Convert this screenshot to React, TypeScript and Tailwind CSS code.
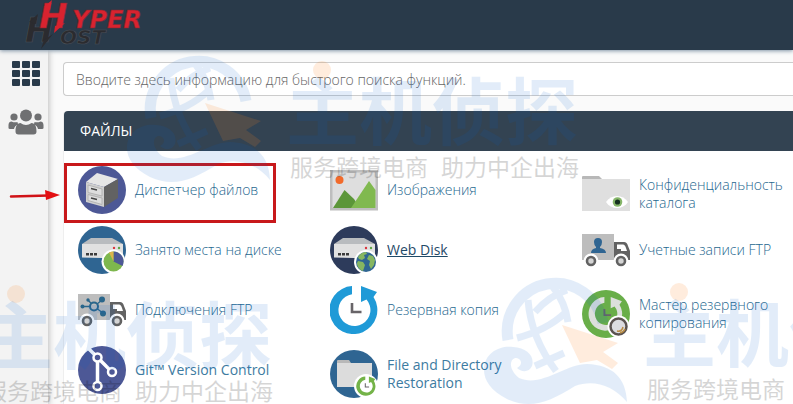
import type { ReactNode } from "react"

function Logo() {
  return (
    <svg viewBox="0 0 130 50" className="h-[50px] w-[130px]" role="img" aria-label="Hyper Host">
      <g fontFamily="DejaVu Sans" fontWeight="700" fontStyle="italic">
        <g fill="#2b2b2f" stroke="#4a5059" strokeWidth="0.6">
          <text x="1" y="42" fontSize="34">H</text>
          <text x="36" y="44" fontSize="20">OST</text>
        </g>
        <path d="M5 22 14 14 12 24z M20 40 29 34 17 49z" fill="#2b2b2f" />
        <g fill="#d8232f" stroke="#7d2731" strokeWidth="0.6">
          <text x="15" y="28" fontSize="34">H</text>
          <text x="48" y="28" fontSize="24">YPER</text>
        </g>
        <path d="M20 7 28 0 26 10z M31 26 41 23 30 33z" fill="#d8232f" />
      </g>
    </svg>
  )
}

function AppsIcon() {
  return (
    <svg viewBox="0 0 28 25" className="h-[25px] w-7" fill="#293a4a">
      {[0, 9, 18].map((y) =>
        [0, 10, 20].map((x) => <rect key={`${x}-${y}`} x={x} y={y} width="8" height="7" rx="1" />)
      )}
    </svg>
  )
}

function UsersIcon() {
  return (
    <svg viewBox="0 0 36 26" className="h-[26px] w-9" fill="#6f7072">
      <circle cx="6" cy="8" r="3.6" />
      <circle cx="30" cy="8" r="3.6" />
      <circle cx="18" cy="6.5" r="6" />
      <path d="M0.5 19v-3c0-2.500 1.500-3.500 3-3.500 2 1 4.500 1 6 0.500 0 1 .5 2 1 2.500-3 .5-4 2.500-4.500 4.500H2Q0.500 20 .5 19zM35.500 19v-3c0-2.500-1.500-3.500-3-3.500-2 1-4.500 1-6 .5 0 1-.5 2-1 2.500 3 .5 4 2.500 4.500 4.500H34q1.500 0 1.500-1z" />
      <path d="M7.500 22.500c0-5 1.500-8.500 5-8.500 3.500 2.500 7.500 2.500 11 0 3.500 0 5 3.500 5 8.500 0 2-1 3-3 3h-15c-2 0-3-1-3-3z" />
    </svg>
  )
}

function Icon({ children }: { children: ReactNode }) {
  return (
    <svg viewBox="0 0 48 48" className="size-12 shrink-0" aria-hidden="true">
      {children}
    </svg>
  )
}

function Cabinet() {
  return (
    <Icon>
      <circle cx="24" cy="24" r="24" fill="#4d5896" />
      <path d="M8 16 19 7 40 13 26 21z" fill="#e6e6e6" />
      <path d="M8 16 26 21V41L8 36z" fill="#cfcfcf" />
      <path d="M26 21 40 13V32L26 41z" fill="#626262" />
      <path d="M10 19 24 23V30L10 26.500zM10 28.500 24 32V38.500L10 34.500z" fill="#dedede" stroke="#b4b4b4" strokeWidth="1" />
      <path d="M13 22.500 19 24M13 32 19 33.500" stroke="#444" strokeWidth="1.500" />
    </Icon>
  )
}

function Drive({ color }: { color: string }) {
  return (
    <>
      <circle cx="24" cy="24" r="24" fill={color} />
      <path d="M13 12H34L45 18H4z" fill="#b9bcbf" />
      <path d="M4 18H45V31L24 32 4 31.500z" fill="#e1e1e1" />
      <path d="M8 27h3v2.500H8zM12 27h3v2.500h-3zM16 27h3v2.500h-3z" fill="#3c3c3c" />
      <circle cx="36" cy="22" r="1.200" fill="#d8343c" />
      <circle cx="41" cy="22" r="1.200" fill="#5da345" />
    </>
  )
}

function DiskUsage() {
  return (
    <Icon>
      <Drive color="#2f6592" />
      <circle cx="35.500" cy="35.500" r="12" fill="#fff" />
      <circle cx="35.500" cy="35.500" r="10" fill="#7eb74e" />
      <path d="M35.500 35.500V25.500A10 10 0 0 1 44.500 40z" fill="#4d5896" />
      <path d="M35.500 35.500 31 26.500A10 10 0 0 1 35.500 25.500z" fill="#dcb44c" />
    </Icon>
  )
}

function WebDisk() {
  return (
    <Icon>
      <Drive color="#2d3b5b" />
      <circle cx="36" cy="36" r="12" fill="#fff" />
      <circle cx="36" cy="36" r="10" fill="#2f6592" />
      <path d="M28 31c2-3 5-5 8-5l1 2-3 1 1 3-3 2-3-1zM28 35l5 1 2 3-2 6c-3-1-6-4-6-8zM39 29l4 1 2 4-1 5-3 4-2-4 1-4-3-2z" fill="#86b660" />
    </Icon>
  )
}

function Images() {
  return (
    <Icon>
      <path d="M0 4H48V44.500H0z" fill="#bebebe" />
      <path d="M2.500 6.500H45.500V42H2.500z" fill="#dedede" />
      <circle cx="9.500" cy="14" r="4" fill="#f26a2a" />
      <path d="M3 42 14.500 24 24 33 30 42z" fill="#5c9639" />
      <path d="M21 42 39 15 45.500 24V42z" fill="#80b94f" />
    </Icon>
  )
}

function Privacy() {
  return (
    <Icon>
      <path d="M0 12V7Q0 6 1 6H17L20 9V12z" fill="#b8b8b8" />
      <path d="M0 9H48V41H0z" fill="#dfdfdf" />
      <path d="M24 32C29 24 41 24 46 32 41 40 29 40 24 32z" fill="#fff" />
      <circle cx="35.500" cy="32" r="4.800" fill="#86b66a" />
      <circle cx="35.500" cy="32" r="2.600" fill="#15301f" />
    </Icon>
  )
}

function Truck({ children }: { children: ReactNode }) {
  return (
    <Icon>
      <path d="M0 8H32V34H0z" fill="#bdbdbd" />
      <path d="M33 16H42Q45 16 46 20L48 25V34H32V16z" fill="#626262" />
      <path d="M35 18.500H41Q43 18.500 44 22L45 25H39V23H35z" fill="#fff" />
      {[9, 39].map((x) => (
        <g key={x}>
          <circle cx={x} cy="35" r="7.500" fill="#fff" />
          <circle cx={x} cy="35" r="4" fill="#d4d4d4" stroke="#626262" strokeWidth="2.600" />
        </g>
      ))}
      {children}
    </Icon>
  )
}

function FtpAccounts() {
  return (
    <Truck>
      <path d="M12 16q0-4 4-4t4 4q0 3-2 5v1q6 1 6 5H9q0-4 5-5v-1q-2-2-2-5z" fill="#2f6592" />
    </Truck>
  )
}

function FtpConnections() {
  return (
    <Truck>
      <g stroke="#2a668b" strokeWidth="1.300">
        <path d="M16 20.500 24 14M16 20.500 25 27M16 20.500 5 20.500M16 20.500 10 14" />
        <circle cx="16" cy="20.500" r="4" fill="#bdbdbd" strokeWidth="2" />
      </g>
      <g fill="#2a668b">
        <circle cx="24" cy="13.500" r="3" />
        <circle cx="25" cy="27.500" r="3" />
        <circle cx="4.500" cy="20.500" r="2" />
        <circle cx="10" cy="14" r="1.700" />
      </g>
    </Truck>
  )
}

// circular arrow, open at the top, with clock hands in the middle
function Rewind({ color }: { color: string }) {
  return (
    <>
      <path d="M22 .1A24 24 0 1 0 43.500 11L47 6 31 0V16L36.500 13.500A16 16 0 1 1 22 8.200z" fill={color} />
      <path d="M22 17V26H31.500" fill="none" stroke="#686468" strokeWidth="2.600" />
    </>
  )
}

function Backup() {
  return (
    <Icon>
      <Rewind color="#1f9ad7" />
    </Icon>
  )
}

function BackupWizard() {
  return (
    <Icon>
      <circle cx="24" cy="24" r="24" fill="#69ae49" />
      <g transform="translate(7 7) scale(.7)">
        <Rewind color="#dcdfdc" />
      </g>
      <circle cx="36.500" cy="36.500" r="11" fill="#fff" />
      <circle cx="36.500" cy="36.500" r="8" fill="#dcdce0" stroke="#5b5350" strokeWidth="2.500" />
      <path d="M35 41q5 1 6-4M38 43q4-1 5-4" fill="none" stroke="#b98c42" strokeWidth="1.500" />
    </Icon>
  )
}

function Git() {
  return (
    <Icon>
      <circle cx="24" cy="24" r="24" fill="#4d5896" />
      <g fill="#4d5896" stroke="#fff" strokeWidth="3.500">
        <path d="M10 2 19.500 11.500 34 26M19.500 11.500V40" fill="none" />
        <circle cx="19.500" cy="11.500" r="4" strokeWidth="2.500" />
        <circle cx="34" cy="26" r="4" strokeWidth="2.500" />
        <circle cx="19.500" cy="40" r="4" strokeWidth="2.500" />
      </g>
    </Icon>
  )
}

function Restoration() {
  return (
    <Icon>
      <circle cx="24" cy="24" r="24" fill="#2f6592" />
      <path d="M7 15V11Q7 10 8 10H19L21 13V15z" fill="#b8b8b8" />
      <path d="M7 13H42V37H7z" fill="#dcdcdc" />
      <circle cx="36" cy="36" r="12" fill="#fff" />
      <g transform="translate(26.500 26.500) scale(.4)">
        <Rewind color="#74b348" />
      </g>
    </Icon>
  )
}

const light = "py-[10px] leading-[18px] font-light text-[#27688f]"
const regular = "py-[10px] leading-[18px] text-[#3d7ba1]"
const active = "py-[10px] leading-[18px] text-[#1f4a68] underline"

const items = [
  { label: "Диспетчер файлов", icon: <Cabinet />, style: light },
  { label: "Изображения", icon: <Images />, style: light },
  { label: "Конфиденциальность каталога", icon: <Privacy />, style: light },
  { label: "Занято места на диске", icon: <DiskUsage />, style: light },
  { label: "Web Disk", icon: <WebDisk />, style: active },
  { label: "Учетные записи FTP", icon: <FtpAccounts />, style: light },
  { label: "Подключения FTP", icon: <FtpConnections />, style: light },
  { label: "Резервная копия", icon: <Backup />, style: light },
  { label: "Мастер резервного копирования", icon: <BackupWizard />, style: light },
  { label: "Git™ Version Control", icon: <Git />, style: regular },
  { label: "File and Directory Restoration", icon: <Restoration />, style: regular },
]

function Stamp({ x, y }: { x: number; y: number }) {
  return (
    <g transform={`translate(${x} ${y})`}>
      <g opacity="0.11" fill="none" stroke="#0060d0" strokeWidth="11">
        <path d="M25 62A48 48 0 0 1 120 45" />
        <path d="M45 22Q48 60 73 93M70 9Q82 24 85 44M34 60Q64 52 82 35M52 88 81 75M84 12Q66 18 52 34" strokeWidth="7" />
        <path
          d="M1 92C1 74 18 67 30 69 44 70 52 78 49 88 46 95 38 94 34 90 41 86 38 80 32 80 26 82 26 92 36 100 58 110 82 86 104 86 130 87 143 100 144 124 130 107 110 101 92 108 66 124 48 132 24 121 8 113 1 102 1 92z"
          fill="#0060d0"
          stroke="none"
        />
      </g>
      <g fill="#ff8420" opacity="0.15">
        <path d="M79 47 135 65 120 74 135 85 129 91 114 82 97 85z" />
        <circle cx="196" cy="14" r="9" />
      </g>
      <g fontFamily="'Noto Sans CJK SC', sans-serif" fontWeight="700" fontSize="73" fill="#0060d0" opacity="0.11">
        <text x="160" y="83">主机侦探</text>
      </g>
      <g fontFamily="'Noto Sans CJK SC', sans-serif" fontSize="23" fill="#000" opacity="0.16">
        <text x="164" y="120">服务跨境电商</text>
        <text x="315" y="120">助力中企出海</text>
      </g>
    </g>
  )
}

function Watermark() {
  return (
    <svg className="pointer-events-none absolute inset-0 z-20 h-full w-full" aria-hidden="true">
      <Stamp x={126} y={56} />
      <Stamp x={-180} y={280} />
      <Stamp x={483} y={278} />
    </svg>
  )
}

export default function App() {
  return (
    <div className="relative flex min-h-screen flex-col overflow-hidden bg-[#fafafa] font-['Open_Sans',sans-serif] text-sm">
      <header className="relative z-10 h-[50px] bg-[#293a4a] pl-6 shadow-[0_1px_4px_#7f93a5]">
        <a href="#home" className="inline-block">
          <Logo />
        </a>
      </header>

      <div className="flex flex-1">
        <nav className="flex w-12 shrink-0 flex-col items-center gap-[23px] bg-[#f3f3f3] pt-[11px] pl-1 shadow-[1px_0_6px_#bbb]">
          <a href="#tools" aria-label="Инструменты">
            <AppsIcon />
          </a>
          <a href="#users" aria-label="Пользователи">
            <UsersIcon />
          </a>
        </nav>

        <main className="flex min-w-0 flex-1 flex-col gap-[15px] pt-3 pl-[15px]">
          <input
            type="text"
            aria-label="Поиск функций"
            placeholder="Вводите здесь информацию для быстрого поиска функций."
            className="h-[34px] w-full shrink-0 rounded-l border border-r-0 border-[#ccc] bg-white px-3 text-sm font-light placeholder:text-[#666]"
          />

          <section className="flex-1 rounded-tl border-l border-[#eee] bg-white">
            <h2 className="flex h-10 items-center rounded-tl bg-[#334352] pl-4 text-sm text-white">ФАЙЛЫ</h2>
            <ul className="grid auto-rows-[60px] grid-cols-[repeat(3,minmax(252px,1fr))] items-start pt-[15px] pl-[14px]">
              {items.map((item) => (
                <li key={item.label} className="pr-8">
                  <a href="#tool" className="flex items-center gap-[9px]">
                    {item.icon}
                    <span className={item.style}>{item.label}</span>
                  </a>
                </li>
              ))}
            </ul>
          </section>
        </main>
      </div>

      {/* Highlight around the file manager */}
      <div className="absolute top-[163px] left-16 z-10 h-[60px] w-[212px] border-3 border-[#c8181b]" />
      <svg viewBox="0 0 52 12" className="absolute top-[189px] left-[9px] z-10 h-3 w-[52px]">
        <path d="M2 7.500 40 6.500" stroke="#d01217" strokeWidth="2.500" strokeLinecap="round" />
        <path d="M36 1 51 6 37 11z" fill="#e30f12" />
      </svg>

      <Watermark />
    </div>
  )
}
